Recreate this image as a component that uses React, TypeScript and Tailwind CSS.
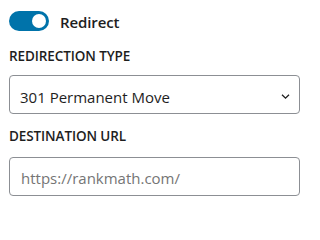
import { useState } from "react";

export default function App() {
  const [on, setOn] = useState(true);
  const [type, setType] = useState("301");

  return (
    <div className="w-[306px] h-[204px] bg-white pl-[9px] pr-[6px] pt-[11px] text-[#1e1e1e] font-['Open_Sans',sans-serif]">
      {/* Toggle */}
      <div className="flex items-center h-5">
        <button
          onClick={() => setOn(!on)}
          className={`relative w-10 h-5 rounded-full ${on ? "bg-[#0073aa]" : "bg-gray-400"}`}
        >
          <span
            className={`absolute top-[3px] w-[14px] h-[14px] rounded-full bg-white ${on ? "left-[23px]" : "left-[3px]"}`}
          />
        </button>
        <span className="ml-[11px] pt-[2px] text-[15px] leading-5 font-semibold tracking-[-0.1px]">Redirect</span>
      </div>

      {/* Redirection type */}
      <p className="mt-[15px] text-[13.5px] leading-5 font-semibold tracking-[-0.1px]">REDIRECTION TYPE</p>
      <div className="relative mt-[9px]">
        <select
          value={type}
          onChange={(e) => setType(e.target.value)}
          className="appearance-none w-full h-[39px] border border-[#8c8f94] rounded-[4px] pl-[10px] pt-[5px] text-[15px] leading-5 bg-white outline-none"
        >
          <option value="301">301 Permanent Move</option>
          <option value="302">302 Temporary Move</option>
          <option value="307">307 Temporary Redirect</option>
        </select>
        <svg
          className="absolute right-[10px] top-[19px] pointer-events-none"
          width="9"
          height="5"
          viewBox="0 0 9 5"
          fill="none"
        >
          <path d="M1 0.8l3.5 3.3L8 0.8" stroke="#1e1e1e" strokeWidth="1.3" />
        </svg>
      </div>

      {/* Destination */}
      <p className="mt-[12px] text-[13.5px] leading-5 font-semibold tracking-[-0.1px]">DESTINATION URL</p>
      <input
        placeholder="https://rankmath.com/"
        className="block mt-[11px] w-full h-[39px] border border-[#8c8f94] rounded-[4px] pl-[11px] pt-[2px] text-[15px] placeholder:text-[#757575] outline-none"
      />
    </div>
  );
}
